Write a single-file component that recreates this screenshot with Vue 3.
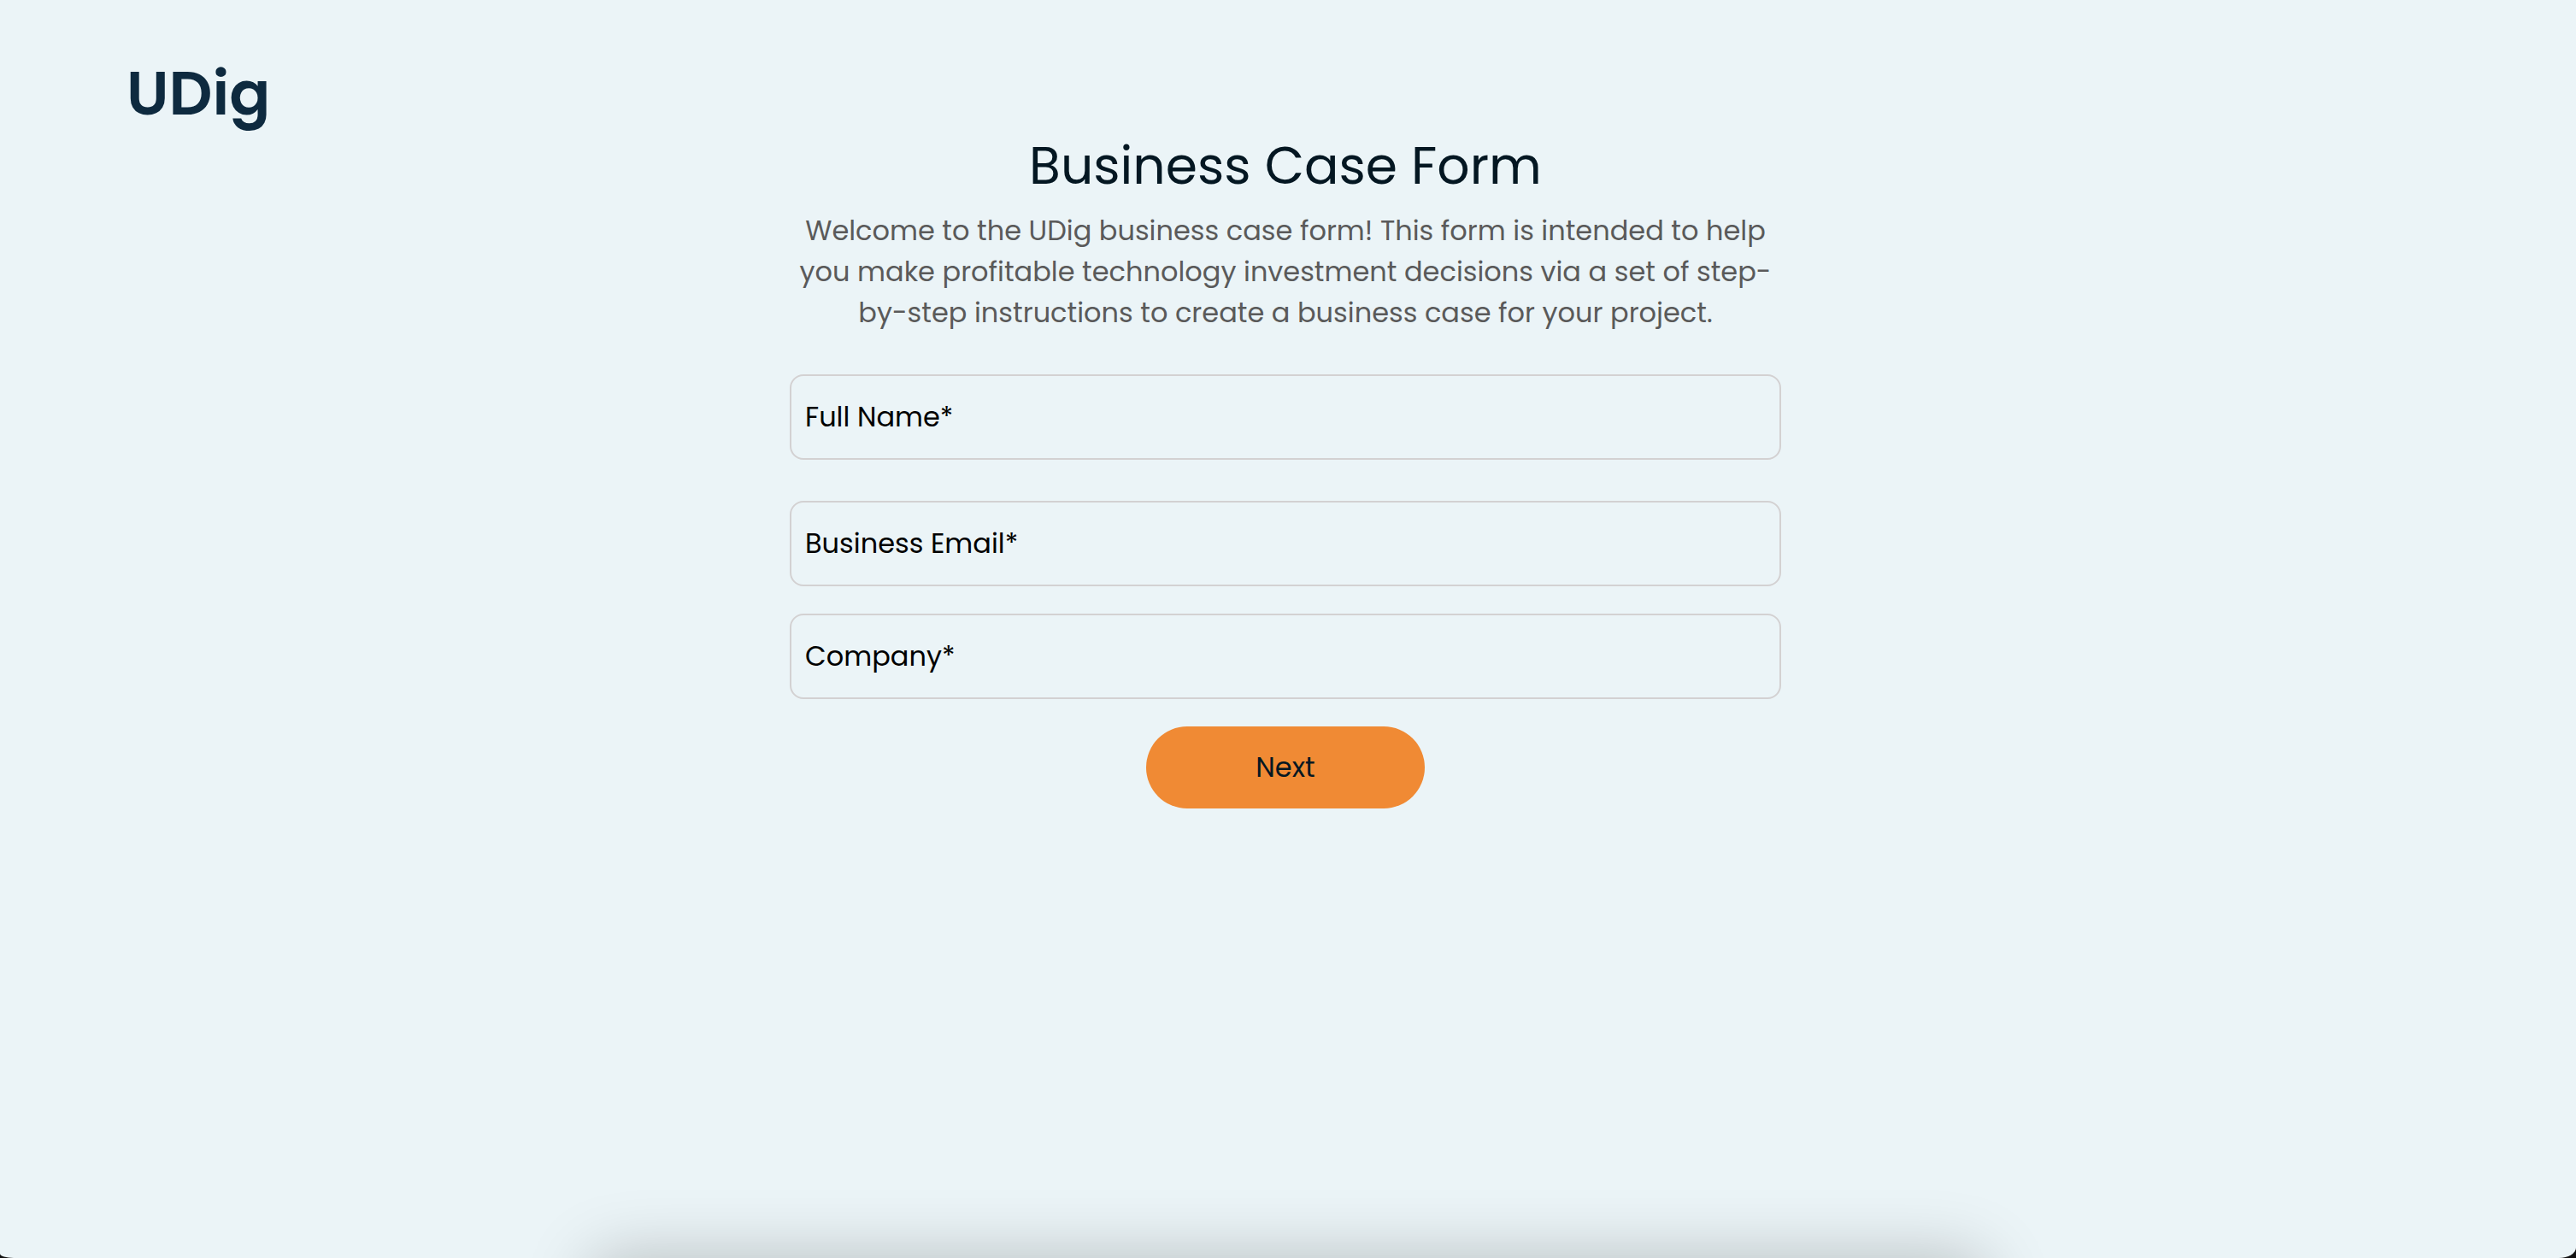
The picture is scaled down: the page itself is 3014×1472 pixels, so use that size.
<script setup>
import { reactive } from 'vue'

const fields = [
  { id: 'fullName', label: 'Full Name*', type: 'text', spaced: true },
  { id: 'email', label: 'Business Email*', type: 'email' },
  { id: 'company', label: 'Company*', type: 'text' }
]

const form = reactive({ fullName: '', email: '', company: '' })
</script>

<template>
  <div class="page">
    <header class="header">
      <a class="brand" href="#" aria-label="UDig home">
        <svg class="logo" viewBox="0 0 164 80" role="img" aria-hidden="true">
          <text x="-4" y="56">UDig</text>
        </svg>
      </a>
    </header>
    <main class="content">
      <h1>Business Case Form</h1>
      <p>
        Welcome to the UDig business case form! This form is intended to help
        you make profitable technology investment decisions via a set of
        step-by-step instructions to create a business case for your project.
      </p>
      <form @submit.prevent>
        <input
          v-for="field in fields"
          :id="field.id"
          :key="field.id"
          v-model="form[field.id]"
          :class="{ spaced: field.spaced }"
          :type="field.type"
          :placeholder="field.label"
          :aria-label="field.label"
        />
        <button type="submit">Next</button>
      </form>
    </main>
  </div>
</template>

<style>
html {
  background: #111;
}
</style>

<style scoped>
.page {
  position: relative;
  box-sizing: border-box;
  min-height: 100vh;
  padding: 78px 158px 0 152px;
  overflow: hidden;
  background: #ebf4f7;
  border-radius: 0 0 20px 16px / 0 0 12px 5px;
  font-family: Poppins, Inter, sans-serif;
  font-size: 32px;
}

/* soft shadow rising from the panel below the fold */
.page::after {
  content: '';
  position: absolute;
  top: 100%;
  left: 23%;
  right: 23%;
  height: 200px;
  border-radius: 20px;
  box-shadow: 0 0 80px rgba(0, 0, 0, 0.23);
}

.header {
  display: flex;
  height: 80px;
}

.logo {
  display: block;
  width: 164px;
  height: 80px;
  overflow: visible;
}

.logo text {
  fill: #0e2a3f;
  font-family: Poppins, Lato, sans-serif;
  font-size: 71px;
  font-weight: 600;
}

.content {
  max-width: 1160px;
  margin: 0 auto;
  text-align: center;
}

h1 {
  margin: 0 0 16px;
  color: #041722;
  font-size: 60px;
  font-weight: 400;
  line-height: 72px;
}

p {
  margin: 0 0 48px;
  color: #5a5a5a;
  line-height: 48px;
}

form {
  display: flex;
  flex-direction: column;
  align-items: center;
  gap: 32px;
}

input {
  box-sizing: border-box;
  width: 100%;
  height: 100px;
  padding: 0 16px;
  border: 2px solid #d3d1d2;
  border-radius: 16px;
  background: transparent;
  color: #000;
  font: inherit;
}

input.spaced {
  margin-bottom: 16px;
}

input::placeholder {
  color: #000;
  opacity: 1;
}

button {
  width: 326px;
  height: 96px;
  padding: 0;
  border: 0;
  border-radius: 48px;
  background: #f08a34;
  color: #041722;
  font: inherit;
  cursor: pointer;
}
</style>
